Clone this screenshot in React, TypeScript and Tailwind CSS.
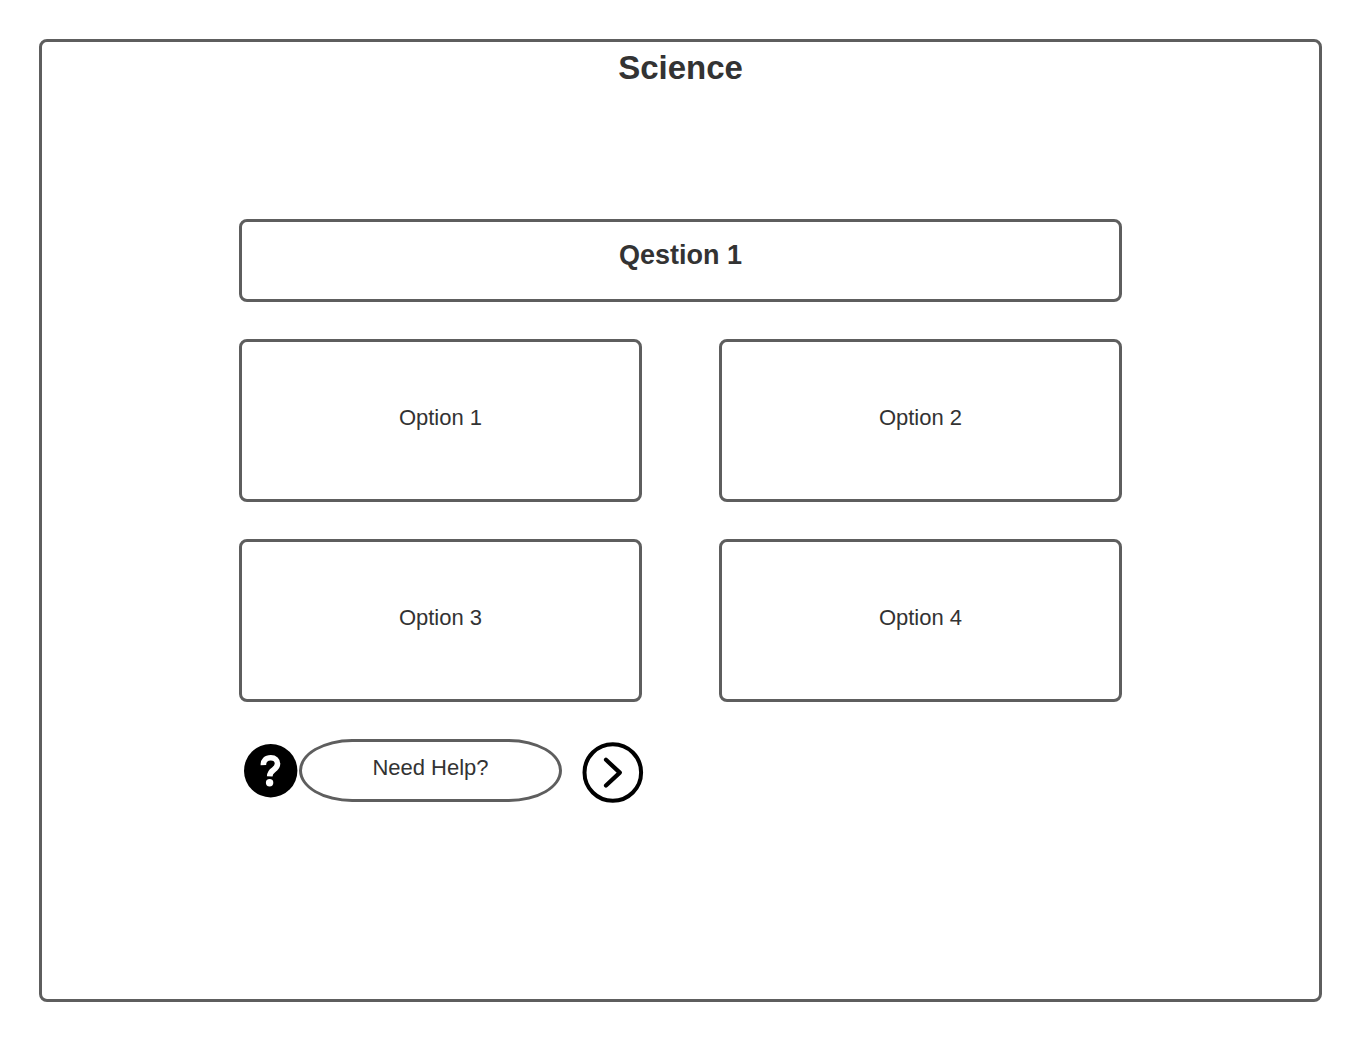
import React from "react";

const options = ["Option 1", "Option 2", "Option 3", "Option 4"];

function HelpIcon() {
  return (
    <svg viewBox="0 0 54 54" className="mt-[5px] ml-[5px] size-[54px] shrink-0" aria-hidden="true">
      <circle cx="26.7" cy="26.7" r="26.7" fill="#000" />
      <path
        d="M19.4 21.2C19.2 16.6 22 13.8 26.8 13.8C31 13.8 33.5 16.4 33.5 19.8C33.5 22.6 32 24.2 29.6 25.8C26.8 27.7 25.8 28.8 25.7 32.4"
        fill="none"
        stroke="#fff"
        strokeWidth="5.6"
      />
      <circle cx="25.6" cy="38.8" r="3.7" fill="#fff" />
    </svg>
  );
}

function NextIcon() {
  return (
    <svg viewBox="0 0 62 62" className="size-[62px]" fill="none" stroke="#000" aria-hidden="true">
      <circle cx="30.8" cy="30.5" r="28.3" strokeWidth="4" />
      <path d="M24 17.8L37.8 30.6L24 43.5" strokeWidth="4.2" strokeLinecap="round" strokeLinejoin="round" />
    </svg>
  );
}

export default function App() {
  return (
    <div className="flex min-h-screen bg-white pt-[39px] pr-[38px] pb-[38px] pl-[39px] font-['Liberation_Sans',Arial,sans-serif] text-[#333333]">
      <main className="flex flex-1 flex-col items-center rounded-lg border-3 border-[#5e5e5e] px-6 pt-[6px] pb-6">
        <h1 className="text-[33px] leading-10 font-bold">Science</h1>

        <section className="mt-[131px] w-full max-w-[883px]">
          <h2 className="flex h-[83px] items-center justify-center rounded-lg border-3 border-[#5e5e5e] pb-3 text-[27px] leading-8 font-bold">
            Qestion 1
          </h2>

          <div className="mt-[37px] grid grid-cols-2 gap-x-[77px] gap-y-[37px]">
            {options.map((option) => (
              <button
                key={option}
                type="button"
                className="flex h-[163px] items-center justify-center rounded-lg border-3 border-[#5e5e5e] pb-[6px] text-[22px] leading-7"
              >
                {option}
              </button>
            ))}
          </div>

          <div className="mt-[37px] flex items-start">
            <HelpIcon />
            <button
              type="button"
              className="ml-px flex h-[63px] w-[263px] items-center justify-center rounded-[54px/32px] border-3 border-[#5e5e5e] pb-[6px] text-[22px] leading-7"
            >
              Need Help?
            </button>
            <button type="button" aria-label="Next question" className="mt-[3px] ml-5 rounded-full">
              <NextIcon />
            </button>
          </div>
        </section>
      </main>
    </div>
  );
}
